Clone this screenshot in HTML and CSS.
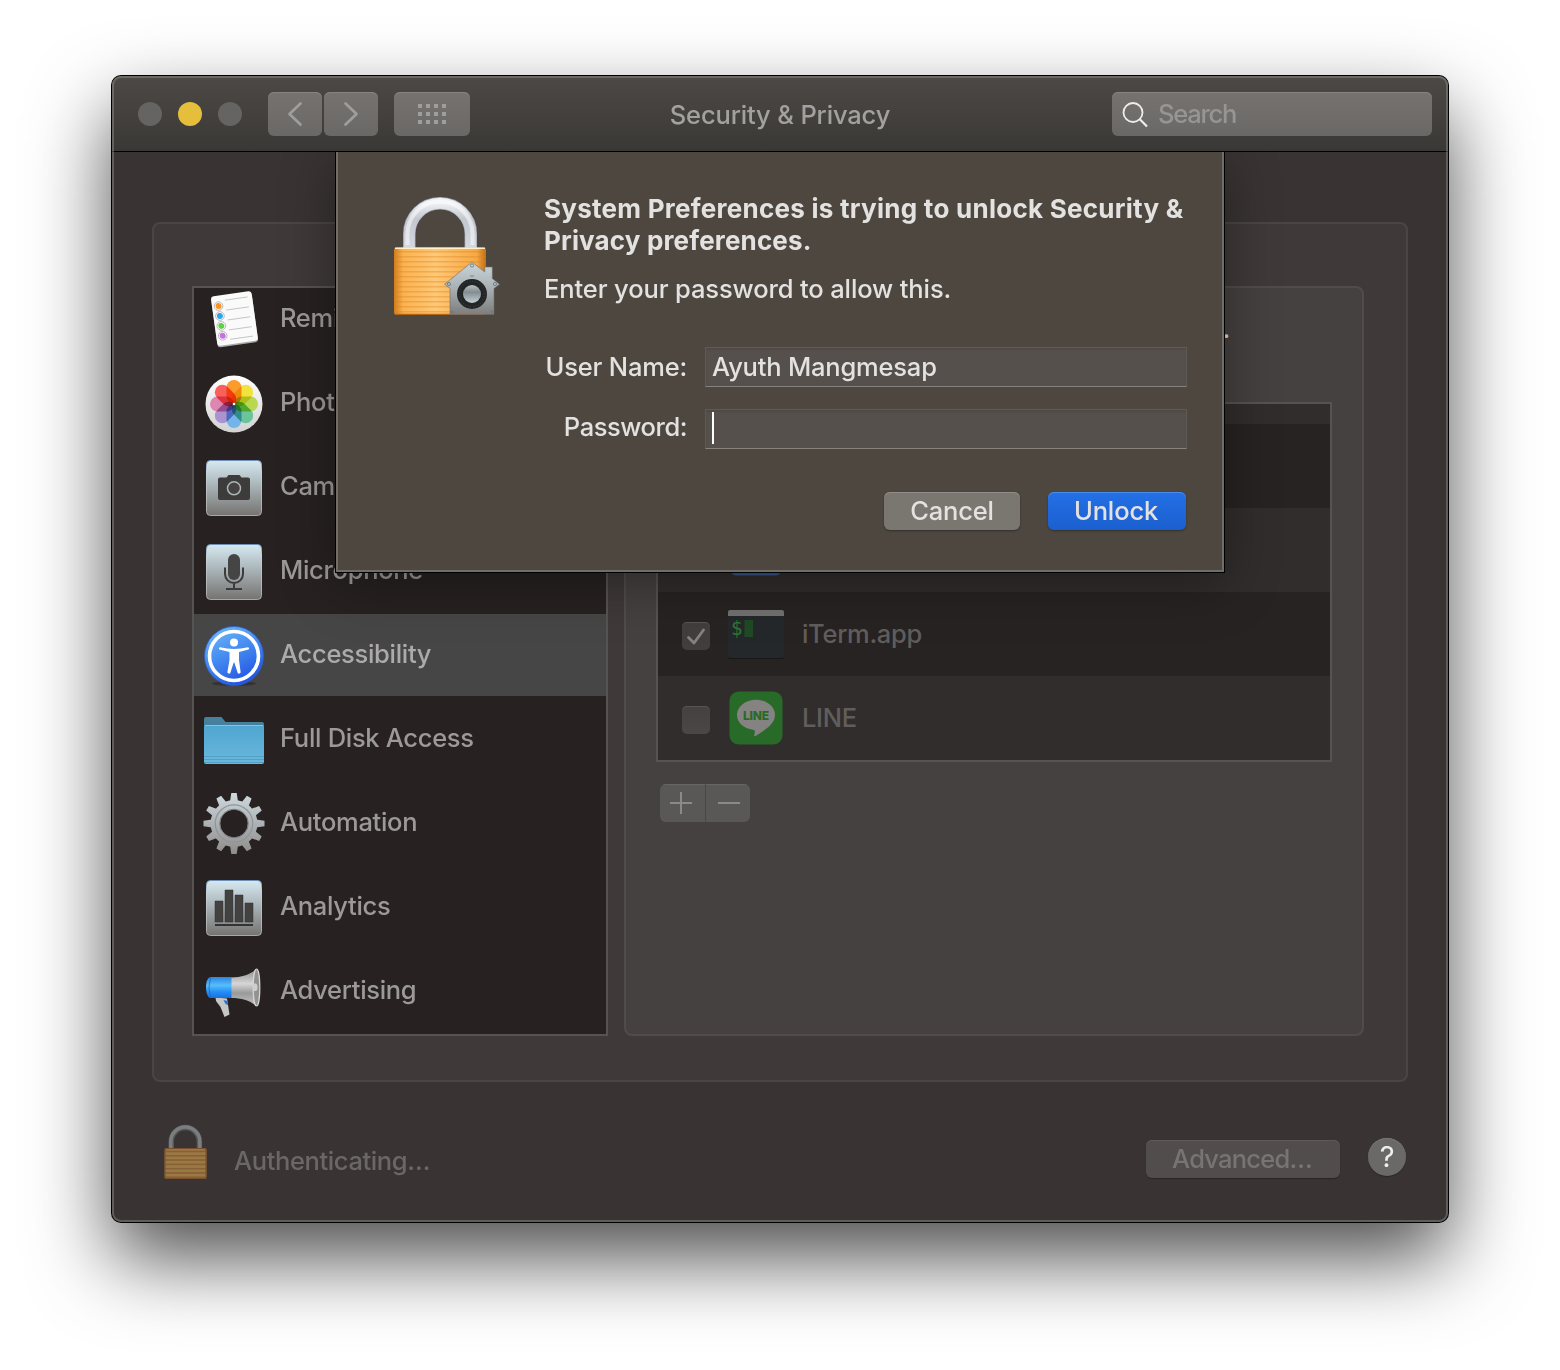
FILE: index.html
```html
<!DOCTYPE html>
<html lang="en">
<head>
<meta charset="utf-8">
<title>Security &amp; Privacy</title>
<link rel="stylesheet" href="styles.css">
</head>
<body>
<svg class="defs" width="0" height="0" aria-hidden="true">
  <defs>
    <linearGradient id="tile" x1="0" y1="0" x2="0" y2="1"><stop offset="0" stop-color="#d6e9f1"/><stop offset=".45" stop-color="#aab5b9"/><stop offset="1" stop-color="#767371"/></linearGradient>
    <linearGradient id="tileEdge" x1="0" y1="0" x2="0" y2="1"><stop offset="0" stop-color="#6f8fb8"/><stop offset=".2" stop-color="#c6d2d8"/><stop offset="1" stop-color="#a9a7a5"/></linearGradient>
    <linearGradient id="white" x1="0" y1="0" x2="0" y2="1"><stop offset="0" stop-color="#fff"/><stop offset="1" stop-color="#d2d2d2"/></linearGradient>
    <linearGradient id="blueDisc" x1=".2" y1="0" x2=".7" y2="1"><stop offset="0" stop-color="#6cb8f8"/><stop offset=".5" stop-color="#4287f0"/><stop offset="1" stop-color="#1f4fe0"/></linearGradient>
    <linearGradient id="folder" x1="0" y1="0" x2="0" y2="1"><stop offset="0" stop-color="#4ea6d0"/><stop offset="1" stop-color="#6bb8dc"/></linearGradient>
    <linearGradient id="gear" x1="0" y1="0" x2="0" y2="1"><stop offset="0" stop-color="#cfdbe0"/><stop offset=".5" stop-color="#adb1b3"/><stop offset="1" stop-color="#8c8a89"/></linearGradient>
    <mask id="gearShape">
      <g transform="translate(32 31.500)" fill="#fff">
        <circle r="23.500"/>
        <path id="tooth" d="M-4-22L-2.700-30.500H2.700L4-22V22L2.700 30.500H-2.700L-4 22Z"/>
        <use href="#tooth" transform="rotate(30)"/><use href="#tooth" transform="rotate(60)"/><use href="#tooth" transform="rotate(90)"/><use href="#tooth" transform="rotate(120)"/><use href="#tooth" transform="rotate(150)"/>
        <circle r="13.800" fill="#000"/>
      </g>
    </mask>
    <linearGradient id="hornBlue" x1="0" y1="0" x2="0" y2="1"><stop offset="0" stop-color="#2b86e0"/><stop offset=".4" stop-color="#58bdfb"/><stop offset=".7" stop-color="#2390f6"/><stop offset="1" stop-color="#1a6fe0"/></linearGradient>
    <linearGradient id="hornGray" x1="0" y1="0" x2="0" y2="1"><stop offset="0" stop-color="#8d8d8d"/><stop offset=".4" stop-color="#d6d6d6"/><stop offset=".65" stop-color="#9a9a9a"/><stop offset="1" stop-color="#c4c4c4"/></linearGradient>
    <linearGradient id="brass" x1="0" y1="0" x2="1" y2="0"><stop offset="0" stop-color="#d07c1c"/><stop offset=".1" stop-color="#fbb250"/><stop offset=".45" stop-color="#ffc877"/><stop offset=".9" stop-color="#f7a843"/><stop offset="1" stop-color="#c06d14"/></linearGradient>
    <linearGradient id="steel" x1="0" y1="0" x2="0" y2="1"><stop offset="0" stop-color="#eef0f3"/><stop offset=".35" stop-color="#c3c7ce"/><stop offset="1" stop-color="#d4d8e2"/></linearGradient>
    <linearGradient id="house" x1="0" y1="0" x2="0" y2="1"><stop offset="0" stop-color="#c9d6db"/><stop offset=".5" stop-color="#a9b0b3"/><stop offset="1" stop-color="#7d7d7c"/></linearGradient>
    <linearGradient id="knob" x1="0" y1="0" x2="0" y2="1"><stop offset="0" stop-color="#b9c2c6"/><stop offset=".4" stop-color="#828c91"/><stop offset="1" stop-color="#c3d0d7"/></linearGradient>
    <pattern id="grooves" width="10" height="5" patternUnits="userSpaceOnUse"><rect width="10" height="1.500" y="3" fill="#d9831f" opacity=".38"/></pattern>
    <pattern id="groovesSmall" width="10" height="4.300" patternUnits="userSpaceOnUse"><rect width="10" height="1.300" y="1" fill="#6f4a28" opacity=".65"/></pattern>
  </defs>
</svg>

<main class="window">
  <header class="toolbar">
    <div class="lights"><i class="light"></i><i class="light light-yellow"></i><i class="light"></i></div>
    <div class="nav">
      <button class="tool"><svg width="54" height="44"><path d="M32.500 11.500L21.500 22L32.500 32.500" fill="none" stroke="#a09e9d" stroke-width="2.700" stroke-linecap="round" stroke-linejoin="round"/></svg></button>
      <button class="tool"><svg width="54" height="44"><path d="M21.500 11.500L32.500 22L21.500 32.500" fill="none" stroke="#a09e9d" stroke-width="2.700" stroke-linecap="round" stroke-linejoin="round"/></svg></button>
    </div>
    <button class="tool tool-grid"><svg width="76" height="44" fill="#a09e9d"><path d="M24 12h4v4h-4zM32 12h4v4h-4zM40 12h4v4h-4zM48 12h4v4h-4zM24 20h4v4h-4zM32 20h4v4h-4zM40 20h4v4h-4zM48 20h4v4h-4zM24 28h4v4h-4zM32 28h4v4h-4zM40 28h4v4h-4zM48 28h4v4h-4z"/></svg></button>
    <h1 class="title">Security &amp; Privacy</h1>
    <div class="search">
      <svg width="28" height="28" fill="none" stroke="#eeedec" stroke-width="1.800"><circle cx="11" cy="11.500" r="9.500"/><path d="M17.800 18.300L25 25.500" stroke-width="2.200"/></svg>
      <span>Search</span>
    </div>
  </header>

  <div class="content">
    <section class="group">
      <div class="sidebar">
        <ul class="categories">
          <li class="category">
            <svg class="icon" viewBox="0 0 64 64"><g transform="translate(32.500 31) rotate(-8)"><rect x="-20.500" y="-24" width="41" height="50" rx="3" fill="#aaa"/><rect x="-20.500" y="-25.500" width="41" height="50" rx="3" fill="#fafafa"/><path d="M-7-20h23M-7-10h23M-7 0h23M-7 10h23M-7 19.500h23" stroke="#bbb" stroke-width=".8"/><g fill="#fff" stroke="#aaa" stroke-width=".8"><circle cx="-14" cy="-15" r="4.300"/><circle cx="-14" cy="-5" r="4.300"/><circle cx="-14" cy="5" r="4.300"/><circle cx="-14" cy="15" r="4.300"/></g><circle cx="-14" cy="-15" r="3" fill="#fb9225"/><circle cx="-14" cy="-5" r="3" fill="#29a6ef"/><circle cx="-14" cy="5" r="3" fill="#5fd144"/><circle cx="-14" cy="15" r="3" fill="#c772e0"/></g></svg>
            <span>Reminders</span></li>
          <li class="category">
            <svg class="icon" viewBox="0 0 64 64"><circle cx="32" cy="32" r="28.500" fill="url(#white)"/><g class="petals" transform="translate(32 32)"><rect x="-7.500" y="-24" width="15" height="24" rx="7.500" fill="#fa9b2c"/><rect x="-7.500" y="-24" width="15" height="24" rx="7.500" fill="#f3e13c" transform="rotate(45)"/><rect x="-7.500" y="-24" width="15" height="24" rx="7.500" fill="#b9d84f" transform="rotate(90)"/><rect x="-7.500" y="-24" width="15" height="24" rx="7.500" fill="#6cc49a" transform="rotate(135)"/><rect x="-7.500" y="-24" width="15" height="24" rx="7.500" fill="#73b5ea" transform="rotate(180)"/><rect x="-7.500" y="-24" width="15" height="24" rx="7.500" fill="#ab93cf" transform="rotate(225)"/><rect x="-7.500" y="-24" width="15" height="24" rx="7.500" fill="#dd86b2" transform="rotate(270)"/><rect x="-7.500" y="-24" width="15" height="24" rx="7.500" fill="#f9605c" transform="rotate(315)"/></g><circle cx="32" cy="32" r="1.300" fill="#fff"/></svg>
            <span>Photos</span></li>
          <li class="category">
            <svg class="icon" viewBox="0 0 64 64"><rect x="4.500" y="4.500" width="55" height="55" rx="4" fill="url(#tile)" stroke="url(#tileEdge)"/><path d="M18 21.500h6.500l2-2.500h11l2 2.500H46a2 2 0 0 1 2 2V42a2 2 0 0 1-2 2H18a2 2 0 0 1-2-2V23.500a2 2 0 0 1 2-2z" fill="#3d3c3b"/><circle cx="32" cy="32.300" r="6.500" fill="#444342" stroke="#a9b5ba" stroke-width="1.500"/></svg>
            <span>Camera</span></li>
          <li class="category">
            <svg class="icon" viewBox="0 0 64 64"><rect x="4.500" y="4.500" width="55" height="55" rx="4" fill="url(#tile)" stroke="url(#tileEdge)"/><rect x="26" y="14" width="12" height="26" rx="6" fill="#464545"/><path d="M23 27.500V34a9 9 0 0 0 18 0V27.500M32 43v5M24 49h16" fill="none" stroke="#3d3c3b" stroke-width="2"/></svg>
            <span>Microphone</span></li>
          <li class="category category-selected">
            <svg class="icon" viewBox="0 0 64 64"><ellipse cx="32" cy="59.500" rx="22" ry="2.500" fill="#272525" opacity=".55"/><circle cx="32" cy="32" r="29.500" fill="url(#blueDisc)" stroke="#2c5fcf" stroke-width=".8"/><circle cx="32" cy="32" r="24.500" fill="none" stroke="#fff" stroke-width="3.600"/><circle cx="32" cy="18.400" r="4" fill="#fff"/><path d="M18 23.200Q32 26.600 46 23.200Q48 24 46.500 25.500L37 28V36L38.700 48.500Q37.500 50.300 35.800 49.300L32.300 38.500H31.700L28.200 49.300Q26.500 50.300 25.300 48.500L27.500 36V28L17.500 25.500Q16 24 18 23.200Z" fill="#fff"/></svg>
            <span>Accessibility</span></li>
          <li class="category">
            <svg class="icon" viewBox="0 0 64 64"><path d="M2 11a2 2 0 0 1 2-2H19.500L23.500 14H60a2 2 0 0 1 2 2v20H2z" fill="#47809d"/><rect x="2" y="17" width="60" height="39" rx="2" fill="url(#folder)"/><path d="M3 17.500h58" stroke="#82c6e2"/><path d="M2 48.500h60M2 51.500h60M2 54.500h60" stroke="#4b96bb" stroke-width=".7"/></svg>
            <span>Full Disk Access</span></li>
          <li class="category">
            <svg class="icon" viewBox="0 0 64 64"><rect width="64" height="64" fill="url(#gear)" mask="url(#gearShape)"/><circle cx="32" cy="31.500" r="18.700" fill="none" stroke="#929698" stroke-width="1.200"/><circle cx="32" cy="31.500" r="14.300" fill="none" stroke="#777b7d"/></svg>
            <span>Automation</span></li>
          <li class="category">
            <svg class="icon" viewBox="0 0 64 64"><rect x="4.500" y="4.500" width="55" height="55" rx="4" fill="url(#tile)" stroke="url(#tileEdge)"/><path d="M13 25h8v21h-8zM23 14h8v32h-8zM33 19h8v27h-8zM43 27h8v19h-8z" fill="#434241" stroke="#333" stroke-width=".5"/><path d="M13 48h38v2H13z" fill="#333"/></svg>
            <span>Analytics</span></li>
          <li class="category">
            <svg class="icon" viewBox="0 0 64 64"><path d="M13.500 37.500L25 38.500L27.500 54.500L22.500 57L18.500 47L14 41Z" fill="#c6c6c6"/><path d="M21.500 40L25.500 41L26 45L23.500 44Z" fill="#1d74dc"/><path d="M29 17.500C40 17 47 15 54.500 9V46C47 40 40 38 29 38Z" fill="url(#hornGray)"/><ellipse cx="54.500" cy="27.500" rx="3.300" ry="18.500" fill="#929292" stroke="#d5d5d5" stroke-width="1.200"/><path d="M51.500 23.500h2q2 0 2 3.800t-2 3.800h-2z" fill="#cecece"/><path d="M8 17H29.500V38H8Q4 36 4 27.500T8 17z" fill="url(#hornBlue)"/><path d="M8.500 17Q5.500 27.500 8.500 38" stroke="#1c66b8" fill="none" stroke-width=".8"/></svg>
            <span>Advertising</span></li>
        </ul>
      </div>

      <div class="pane">
        <p class="pane-note">Allow the apps below to control your computer.</p>
        <div class="apps">
          <div class="app app-partial"></div>
          <div class="app"></div>
          <div class="app"><i class="app-spacer"></i><svg width="56" height="56"><rect x="3" y="3" width="50" height="50.500" rx="5" fill="#35568f"/></svg></div>
          <div class="app">
            <i class="check check-on"><svg width="28" height="28"><path d="M6.500 15.500L12 21L21.500 8" fill="none" stroke="#858382" stroke-width="2.800" stroke-linecap="round" stroke-linejoin="round"/></svg></i>
            <svg width="56" height="56"><rect y="4" width="56" height="49" rx="2" fill="#181818"/><rect y="4" width="56" height="48" rx="2" fill="#25282a"/><path d="M0 10V6a2 2 0 0 1 2-2H54a2 2 0 0 1 2 2v4z" fill="#73716f"/><text x="3" y="29" class="prompt">$</text><rect x="16.500" y="14" width="8.500" height="17" fill="#1f4a24"/></svg>
            <span>iTerm.app</span>
          </div>
          <div class="app">
            <i class="check"></i>
            <svg width="56" height="56"><rect x="1.500" y="1.500" width="53" height="53" rx="9" fill="#286a28"/><path d="M28 9.700C38.500 9.700 47 16.400 47 24.800C47 30.500 43.500 35 37.500 39.300C34 42 30.500 44.500 27 46.200C26 46.700 26 46 26.500 44C27.200 41.200 27 40.200 25 39.800C15.500 38.500 9 32.800 9 24.800C9 16.400 17.500 9.700 28 9.700Z" fill="#858381"/><text x="28" y="30" class="line-logo" text-anchor="middle" textLength="26">LINE</text></svg>
            <span>LINE</span>
          </div>
        </div>
        <div class="add-remove">
          <button><svg width="44" height="38"><path d="M10 19h22M21 8v22" stroke="#8b8a88" stroke-width="2"/></svg></button>
          <button><svg width="44" height="38"><path d="M12 19h22" stroke="#8b8a88" stroke-width="2"/></svg></button>
        </div>
      </div>
    </section>

    <footer class="footer">
      <svg class="footer-lock" width="44" height="56"><path d="M7.200 25V17.700a14.100 14.100 0 0 1 28.200 0V25" fill="none" stroke="#55585b" stroke-width="5.500"/><path d="M6.800 25V17.400a14.500 14.500 0 0 1 29 0V25" fill="none" stroke="#7b7d7f" stroke-width="3.500"/><rect x=".5" y="24" width="42" height="31" rx="2" fill="#9c7845"/><rect x=".5" y="24" width="42" height="31" rx="2" fill="url(#groovesSmall)"/><rect x="1" y="24.500" width="41" height="30" rx="2" fill="none" stroke="#7a4d2b"/></svg>
      <span class="status">Authenticating…</span>
      <button class="advanced">Advanced…</button>
      <button class="help">?</button>
    </footer>

    <div class="sheet" role="dialog">
      <svg class="sheet-lock" width="112" height="126">
        <path d="M19.300 56V41a30.750 30.750 0 0 1 61.500 0V56" fill="none" stroke="#a3abb6" stroke-width="12.400"/>
        <path d="M19.300 56V41a30.750 30.750 0 0 1 61.500 0V56" fill="none" stroke="url(#steel)" stroke-width="11"/>
        <path d="M17.500 52V41a32.500 32.500 0 0 1 65 0V52" fill="none" stroke="#fff" stroke-width="4" opacity=".5"/>
        <rect x="4" y="54.500" width="92" height="67.500" rx="3" fill="url(#brass)"/>
        <rect x="4" y="58" width="92" height="63" fill="url(#grooves)"/>
        <path d="M5 55.200h90" stroke="#fff0c8" stroke-width="1.400"/><path d="M6 121.400h88" stroke="#b56411" stroke-width="1.400"/>
        <path d="M82 69L94.700 79V74h7.600v11.500L109.500 91.300L104 95.500V121.500H60V95.500L54.500 91.300Z" fill="url(#house)" stroke="#6f6c66" stroke-width=".6"/>
        <g fill="none" stroke="#697278" stroke-width=".8"><circle cx="82" cy="72.500" r="1.600"/><circle cx="59" cy="91" r="1.600"/><circle cx="105" cy="91" r="1.600"/><path d="M80 83h4"/><circle cx="62.300" cy="118.700" r=".8"/><circle cx="101.700" cy="118.700" r=".8"/></g>
        <circle cx="82" cy="101" r="15" fill="#222526"/><circle cx="82" cy="101" r="12.700" fill="none" stroke="#3c4042" stroke-width="2" stroke-dasharray=".6 2"/><circle cx="82" cy="101" r="9" fill="url(#knob)"/>
      </svg>
      <div class="sheet-body">
        <h2><span class="line-wide">System Preferences is trying to unlock Security &amp;</span><br>Privacy preferences.</h2>
        <p>Enter your password to allow this.</p>
        <div class="form">
          <label>User Name:</label><div class="field">Ayuth Mangmesap</div>
          <label class="label-password">Password:</label><div class="field"><i class="caret"></i></div>
        </div>
        <div class="actions"><button class="btn">Cancel</button><button class="btn btn-primary">Unlock</button></div>
      </div>
    </div>
  </div>
</main>
</body>
</html>
```
FILE: styles.css
```css
* { box-sizing: border-box; }
body { margin: 0; height: 1370px; padding-top: 76px; background: #fff; font-family: Inter, "Liberation Sans", sans-serif; font-size: 25.5px; font-weight: 450; letter-spacing: -.15px; color: #9c9a98; overflow: hidden; }
h1, h2, p, ul { margin: 0; padding: 0; font-size: inherit; font-weight: inherit; }
ul { list-style: none; }
button { font: inherit; letter-spacing: inherit; color: inherit; border: 0; padding: 0; }
svg { display: block; flex: none; }
.defs { position: absolute; }

.window { position: relative; width: 1336px; height: 1146px; margin: 0 auto; border-radius: 9px; background: #393433; box-shadow: 0 0 0 1px #000, 0 36px 80px rgba(0, 0, 0, .7); }
.window::after { content: ""; position: absolute; inset: 0; border-radius: 9px; box-shadow: inset 0 0 0 2px rgba(150, 152, 146, .42); pointer-events: none; }

.toolbar { display: flex; align-items: center; height: 76px; padding: 0 16px 0 26px; border-bottom: 1px solid #000; border-radius: 9px 9px 0 0; background: linear-gradient(#4d4945, #3a3836); }
.lights { display: flex; gap: 16px; margin-right: 26px; }
.light { width: 24px; height: 24px; border-radius: 50%; background: #666462; }
.light-yellow { background: #e5bf3c; }
.nav { display: flex; gap: 2px; margin-right: 16px; }
.tool, .search { height: 44px; border-radius: 6px; background: linear-gradient(#767270, #6a6866); box-shadow: inset 0 1px #868381; }
.title { flex: 1; text-align: center; padding: 1px 22px 0 0; color: #a3a19f; }
.search { display: flex; align-items: center; width: 320px; padding-left: 10px; color: #979593; letter-spacing: -1.25px; }
.search svg { margin: 2px 8px 0 0; }

.content { position: relative; height: 1070px; padding: 70px 40px 0; overflow: hidden; border-radius: 0 0 9px 9px; }
.group { display: flex; gap: 16px; height: 860px; padding: 62px 42px 44px 38px; border: 2px solid #4a4645; border-radius: 8px; background: #3f3a39; }
.sidebar { width: 416px; height: 750px; border: 2px solid #555453; background: #272221; overflow: hidden; }
.categories { margin-top: -10px; letter-spacing: -.3px; }
.category { display: flex; align-items: center; height: 82px; margin-bottom: 2px; padding: 0 0 4px 8px; }
.category-selected { background: #464646; color: #adabaa; }
.icon { width: 64px; height: 64px; margin: 6px 14px 0 0; }
.petals { isolation: isolate; }
.petals rect { mix-blend-mode: multiply; }

.pane { width: 740px; height: 750px; border: 2px solid #504c4b; border-radius: 8px; background: #454140; padding: 0 30px; }
.pane-note { height: 114px; padding: 25px 102px 0 0; text-align: right; white-space: nowrap; color: #dddbda; }
.apps { width: 676px; height: 360px; border: 2px solid #555453; color: #605e5c; letter-spacing: -.3px; }
.app { display: flex; align-items: center; height: 84px; padding: 0 0 2px 24px; background: #272322; }
.app:nth-child(odd) { background: #312d2c; }
.app-partial { height: 20px; }
.app svg { margin: 2px 18px 0 0; }
.check { width: 28px; height: 28px; margin: 6px 18px 0 0; border-radius: 5px; background: linear-gradient(#444140, #4a4746); box-shadow: inset 0 1px #575452; }
.check-on { background: #413e3d; }
.app .check svg { margin: 0; }
.app-spacer { width: 46px; }
.prompt { font: 19px "DejaVu Sans Mono", monospace; letter-spacing: 0; fill: #2a7a31; }
.line-logo { font: 800 12px Inter, sans-serif; letter-spacing: 0; fill: #286a28; }
.add-remove { display: flex; gap: 1px; width: 90px; margin: 22px 0 0 4px; border-radius: 6px; background: #4a4746; overflow: hidden; }
.add-remove button { flex: 1; height: 38px; background: #5a5856; box-shadow: inset 0 1px #686664; }

.footer { display: flex; align-items: center; height: 140px; padding: 8px 2px 0 12px; color: #6a6866; }
.footer-lock { margin: -8px 26px 0 0; }
.status { flex: 1; padding-top: 8px; letter-spacing: -.38px; }
.advanced { width: 194px; height: 38px; margin: 6px 28px 0 0; padding: 0 2px 2px 0; border-radius: 6px; background: #514d4c; color: #777573; letter-spacing: -.78px; box-shadow: inset 0 1px #5d5a58, 0 1px 1px rgba(0, 0, 0, .3); }
.help { width: 38px; height: 38px; margin-top: 2px; border-radius: 50%; background: #6a6967; color: #efeeed; box-shadow: inset 0 1px #797775, 0 1px 1px rgba(0, 0, 0, .3); font-size: 29px; font-weight: 400; line-height: 38px; }

.sheet { position: absolute; left: 224px; top: 0; display: flex; width: 888px; height: 420px; padding: 41px 37px 0 54px; background: #4d4740; box-shadow: inset 2px 0 #716d68, inset -2px 0 #716d68, inset 0 -2px #716d68, 0 0 0 1px #000, 0 10px 50px rgba(0, 0, 0, .38); color: #e3e2e0; }
.sheet-lock { margin-right: 42px; }
.sheet-body { flex: 1; }
.sheet h2 { font-size: 26px; font-weight: 700; line-height: 32px; letter-spacing: .15px; white-space: nowrap; }
.line-wide { letter-spacing: .26px; }
.sheet p { margin: 16px 0 42px; line-height: 32px; letter-spacing: -.12px; }
.form { display: grid; grid-template-columns: 143px 482px; gap: 22px 18px; line-height: 39px; letter-spacing: -.2px; }
.form label { text-align: right; }
.form .label-password { line-height: 36px; letter-spacing: -.45px; }
.field { height: 40px; padding: 0 6px; border: 1px solid #5e5a55; border-bottom-color: #85827e; background: #55504b; line-height: 38px; box-shadow: inset 0 2px 2px rgba(0, 0, 0, .08); }
.caret { display: block; width: 2px; height: 32px; margin-top: 2px; background: #fff; }
.actions { display: flex; justify-content: flex-end; gap: 28px; margin: 43px 1px 0 0; }
.btn { width: 136px; height: 38px; padding-bottom: 2px; border-radius: 6px; background: #7a7670; box-shadow: inset 0 1px #918e89, 0 1px 2px rgba(0, 0, 0, .35); }
.btn-primary { width: 138px; padding-right: 2px; background: linear-gradient(#2470e6, #1a5fce); box-shadow: inset 0 1px #4b8bec, 0 1px 2px rgba(0, 0, 0, .35); }
```
